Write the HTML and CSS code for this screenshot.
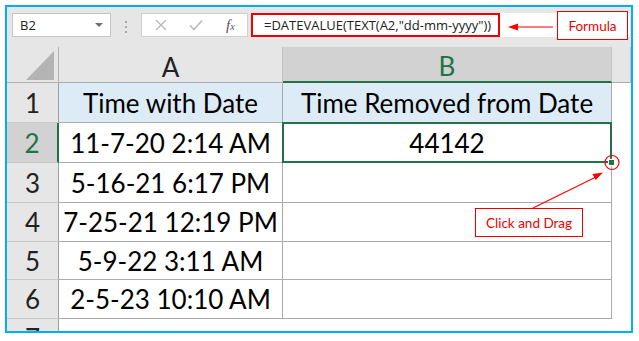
FILE: index.html
```html
<!DOCTYPE html>
<html lang="en">
<head>
  <meta charset="UTF-8">
  <meta name="viewport" content="width=device-width, initial-scale=1.0">
  <title>DATEVALUE - Time Removed from Date</title>
  <link rel="stylesheet" href="styles.css">
</head>
<body>
  <div class="frame">
    <!-- Formula bar -->
    <div class="toolbar">
      <div class="namebox">
        <span>B2</span>
        <span class="caret"></span>
      </div>
      <div class="grip"></div>
      <div class="fxbox">
        <svg class="icon" width="12" height="12" viewBox="0 0 12 12"><path d="M1 1 L11 11 M11 1 L1 11" stroke="#b9b9b9" stroke-width="1.4" fill="none"/></svg>
        <svg class="icon" width="14" height="12" viewBox="0 0 14 12"><path d="M1 6.5 L5 10.5 L13 1.5" stroke="#b9b9b9" stroke-width="1.6" fill="none"/></svg>
        <span class="fx">f<small>x</small></span>
      </div>
      <div class="formula">
        <span class="formula-text">=DATEVALUE(TEXT(A2,"dd-mm-yyyy"))</span>
      </div>
    </div>

    <!-- Sheet -->
    <div class="sheet">
      <div class="corner"><span class="select-all"></span></div>
      <div class="colhead">A</div>
      <div class="colhead sel">B</div>
      <div class="colhead"></div>

      <div class="rowhead">1</div>
      <div class="cell title">Time with Date</div>
      <div class="cell title">Time Removed from Date</div>
      <div class="blank"></div>

      <div class="rowhead sel">2</div>
      <div class="cell">11-7-20 2:14 AM</div>
      <div class="cell active">44142</div>
      <div class="blank"></div>

      <div class="rowhead">3</div>
      <div class="cell">5-16-21 6:17 PM</div>
      <div class="cell"></div>
      <div class="blank"></div>

      <div class="rowhead">4</div>
      <div class="cell">7-25-21 12:19 PM</div>
      <div class="cell"></div>
      <div class="blank"></div>

      <div class="rowhead">5</div>
      <div class="cell">5-9-22 3:11 AM</div>
      <div class="cell"></div>
      <div class="blank"></div>

      <div class="rowhead">6</div>
      <div class="cell">2-5-23 10:10 AM</div>
      <div class="cell"></div>
      <div class="blank"></div>

      <div class="rowhead last">7</div>
      <div class="blank"></div>
      <div class="blank"></div>
      <div class="blank"></div>
    </div>
  </div>

  <!-- Annotations -->
  <div class="callout callout-formula">Formula</div>
  <div class="callout callout-drag">Click and Drag</div>
  <svg class="marks" width="639" height="341" viewBox="0 0 639 341">
    <line x1="517" y1="27" x2="553" y2="27" stroke="#f00" stroke-width="1.2"/>
    <polygon points="508,27 518,23.5 518,30.5" fill="#f00"/>
    <line x1="533" y1="208" x2="595" y2="177.5" stroke="#f00" stroke-width="1.2"/>
    <polygon points="603,172.5 595.7,180.1 592.5,173.9" fill="#f00"/>
    <circle cx="612" cy="162.5" r="7" stroke="#f00" stroke-width="1.2" fill="none"/>
  </svg>
</body>
</html>
```

FILE: styles.css
```css
body {
  margin: 0;
  background: #fff;
  font-family: "Open Sans", sans-serif;
}

.frame {
  margin: 5px;
  width: 624px;
  height: 324px;
  border: 2px solid #00b0f0;
  overflow: hidden;
  background: #fff;
}

/* Formula bar */
.toolbar {
  height: 40px;
  box-sizing: border-box;
  padding: 6px 1px 0 5px;
  background: #e6e6e6;
  display: flex;
  align-items: flex-start;
}

.namebox {
  width: 99px;
  height: 24px;
  box-sizing: border-box;
  background: #fff;
  border: 1px solid #c6c6c6;
  display: flex;
  align-items: center;
  justify-content: space-between;
  padding: 0 7px 0 7px;
  font-size: 13px;
  color: #222;
}

.caret {
  width: 0;
  height: 0;
  border-left: 4px solid transparent;
  border-right: 4px solid transparent;
  border-top: 4px solid #6d6d6d;
}

.grip {
  width: 2px;
  height: 12px;
  margin: 8px 14px 0 14px;
  background: repeating-linear-gradient(#a9a9a9 0 2px, transparent 2px 5px);
}

.fxbox {
  width: 107px;
  height: 24px;
  box-sizing: border-box;
  background: #fff;
  border: 1px solid #cfcfcf;
  display: flex;
  align-items: center;
  padding-left: 13px;
  gap: 22px;
}

.fx {
  font-family: "Liberation Serif", serif;
  font-style: italic;
  font-size: 15px;
  color: #555;
  margin-left: 1px;
}

.fx small {
  font-size: 10px;
}

.formula {
  flex: 1;
  margin-left: 3px;
  height: 24px;
  background: #fff;
  display: flex;
}

.formula-text {
  height: 24px;
  box-sizing: border-box;
  border: 2px solid #e00;
  padding: 0 7px 0 11px;
  font-size: 13px;
  line-height: 20px;
  color: #222;
  white-space: nowrap;
}

/* Sheet */
.sheet {
  display: grid;
  grid-template-columns: 52px 224px 329px 1fr;
  grid-template-rows: 36px 40px 40px 40px 39px 38px 39px 40px;
  font-family: Lato, "Open Sans", sans-serif;
  font-size: 26px;
}

.sheet > div {
  box-sizing: border-box;
  display: flex;
  align-items: center;
  justify-content: center;
}

.corner {
  background: #e6e6e6;
  border-right: 1px solid #b4b4b4;
  border-bottom: 1px solid #b4b4b4;
  position: relative;
}

.select-all {
  position: absolute;
  right: 4px;
  bottom: 2px;
  width: 28px;
  height: 29px;
  background: #b4b4b4;
  clip-path: polygon(100% 0, 100% 100%, 0 100%);
}

.colhead {
  background: #e6e6e6;
  border-right: 1px solid #c2c2c2;
  border-bottom: 1px solid #ababab;
  color: #222;
  padding-top: 4px;
}

.colhead.sel {
  background: #d2d2d2;
  color: #217346;
  border-bottom: 2px solid #217346;
}

.rowhead {
  background: #e6e6e6;
  border-right: 1px solid #9f9f9f;
  border-bottom: 1px solid #c8c8c8;
  color: #222;
}

.rowhead.sel {
  background: #d2d2d2;
  color: #217346;
  border-right: 2px solid #217346;
}

.rowhead.last {
  align-items: flex-start;
  padding-top: 3px;
}

.cell {
  border-right: 1px solid #ababab;
  border-bottom: 1px solid #ababab;
  color: #000;
}

.cell.title {
  background: #ddebf7;
}

.cell.active {
  position: relative;
  border-color: transparent;
}

.cell.active::before {
  content: "";
  position: absolute;
  top: -1px;
  left: -1px;
  right: -1px;
  bottom: -1px;
  border: 2px solid #217346;
}

.cell.active::after {
  content: "";
  position: absolute;
  right: -4px;
  bottom: -4px;
  width: 5px;
  height: 5px;
  background: #217346;
  border: 1px solid #fff;
}

.blank {
  background: #fff;
}

/* Annotations */
.callout {
  position: absolute;
  box-sizing: border-box;
  background: #fff;
  border: 1.5px solid #e00;
  color: #e00;
  font-family: Lato, sans-serif;
  font-size: 13.5px;
  display: flex;
  align-items: center;
  justify-content: center;
}

.callout-formula {
  left: 557px;
  top: 11px;
  width: 71px;
  height: 29px;
}

.callout-drag {
  left: 475px;
  top: 208px;
  width: 108px;
  height: 29px;
}

.marks {
  position: absolute;
  left: 0;
  top: 0;
  pointer-events: none;
}
```
